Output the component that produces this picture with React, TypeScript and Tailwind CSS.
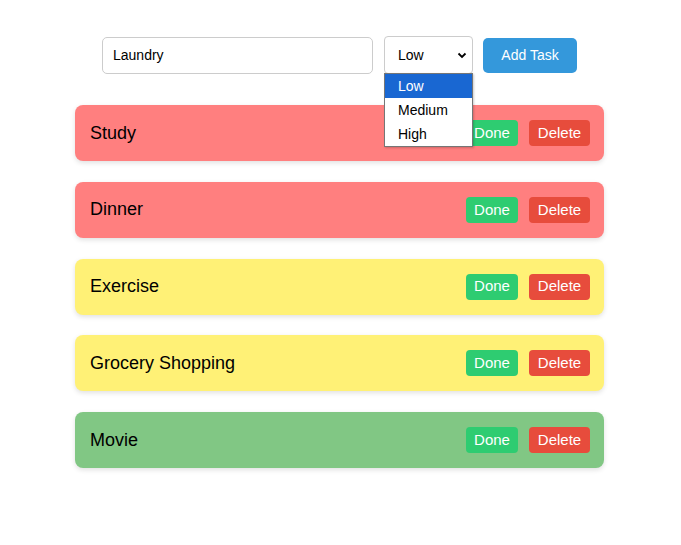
import React from "react";

const tasks = [
  { name: "Study", bg: "bg-[#ff7f7f]" },
  { name: "Dinner", bg: "bg-[#ff7f7f]" },
  { name: "Exercise", bg: "bg-[#fff176]" },
  { name: "Grocery Shopping", bg: "bg-[#fff176]" },
  { name: "Movie", bg: "bg-[#81c784]" },
];

export default function App() {
  return (
    <div className="min-h-[545px] bg-white pr-[2px] pt-[36px] font-['Liberation_Sans',Arial,sans-serif] text-black">
      <div className="flex items-center justify-center">
        <div className="flex h-[37px] w-[271px] items-center rounded-[5px] border border-[#cccccc] px-[10px] text-[14px]">
          Laundry
        </div>
        <div className="relative ml-[11px]">
          <div className="flex h-[38px] w-[89px] items-center justify-between rounded-[4px] border border-[#cccccc] pl-[13px] pr-[4px] text-[14px]">
            <span>Low</span>
            <svg width="10" height="7" viewBox="0 0 10 7" className="mr-[1px]">
              <path d="M1.5 1.5 L5 5 L8.5 1.5" fill="none" stroke="#000" strokeWidth="1.8" />
            </svg>
          </div>
          <div className="absolute left-0 top-[37px] z-10 w-[89px] border border-[#767676] bg-white text-[14px] shadow-[1px_1px_2px_rgba(0,0,0,0.2)]">
            <div className="flex h-[24px] items-center bg-[#1967d2] pl-[13px] text-white">Low</div>
            <div className="flex h-[24px] items-center pl-[13px]">Medium</div>
            <div className="flex h-[24px] items-center pl-[13px]">High</div>
          </div>
        </div>
        <div className="ml-[10px] flex h-[35px] w-[94px] items-center justify-center rounded-[5px] bg-[#3498db] text-[14px] text-white">
          Add Task
        </div>
      </div>
      <div className="mx-auto mt-[31px] flex w-[529px] flex-col gap-[20.75px]">
        {tasks.map((t) => (
          <div
            key={t.name}
            className={`flex h-[56px] items-center justify-between rounded-[8px] ${t.bg} pl-[15px] pr-[14px] shadow-[0_2px_5px_rgba(0,0,0,0.12)]`}
          >
            <span className="text-[18px]">{t.name}</span>
            <div className="flex gap-[11px]">
              <div className="flex h-[26px] w-[52px] items-center justify-center rounded-[4px] bg-[#2ecc71] text-[15px] text-white">
                Done
              </div>
              <div className="flex h-[26px] w-[61px] items-center justify-center rounded-[4px] bg-[#e74c3c] text-[15px] text-white">
                Delete
              </div>
            </div>
          </div>
        ))}
      </div>
    </div>
  );
}
